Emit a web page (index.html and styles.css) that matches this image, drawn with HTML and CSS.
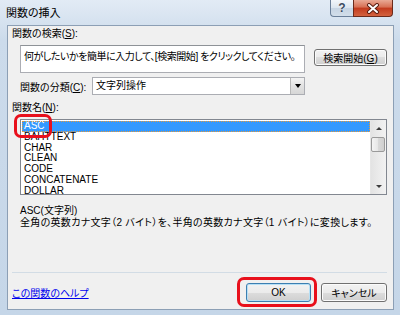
FILE: index.html
```html
<!DOCTYPE html>
<html lang="ja">
<head>
    <meta charset="UTF-8">
    <title>関数の挿入</title>
    <link rel="stylesheet" href="styles.css">
</head>
<body>
    <div class="window">
        <div class="titlebar">
            <span class="title">関数の挿入</span>
            <div class="caption-buttons">
                <div class="cap-btn help">?</div>
                <div class="cap-btn close">
                    <svg width="14" height="11" viewBox="0 0 14 11">
                        <path d="M3 2 L11 9 M11 2 L3 9" stroke="#5a1e12" stroke-width="4" stroke-linecap="round"/>
                        <path d="M3 2 L11 9 M11 2 L3 9" stroke="#fff" stroke-width="2" stroke-linecap="round"/>
                    </svg>
                </div>
            </div>
        </div>

        <div class="client">
            <div class="label">関数の検索(<u>S</u>):</div>
            <div class="search-row">
                <div class="textbox">何がしたいかを簡単に入力して、[検索開始] をクリックしてください。</div>
                <button class="btn search-btn">検索開始(<u>G</u>)</button>
            </div>
            <div class="category-row">
                <span class="category-label">関数の分類(<u>C</u>):</span>
                <div class="select">
                    <span class="select-value">文字列操作</span>
                    <span class="drop"><span class="arrow-down"></span></span>
                </div>
            </div>
            <div class="label name-label">関数名(<u>N</u>):</div>
            <div class="listbox">
                <ul class="items">
                    <li class="selected">ASC</li>
                    <li>BAHTTEXT</li>
                    <li>CHAR</li>
                    <li>CLEAN</li>
                    <li>CODE</li>
                    <li>CONCATENATE</li>
                    <li>DOLLAR</li>
                </ul>
                <div class="scrollbar">
                    <div class="sb-btn"><span class="tri-up"></span></div>
                    <div class="sb-track"><div class="thumb"></div></div>
                    <div class="sb-btn"><span class="tri-down"></span></div>
                </div>
                <span class="ring ring-asc"></span>
            </div>
            <div class="desc">
                <div>ASC(文字列)</div>
                <div class="desc-text">全角の英数カナ文字（2 バイト）を、半角の英数カナ文字（1 バイト）に変換します。</div>
            </div>
            <div class="separator"></div>
            <div class="footer">
                <a href="#" class="help-link">この関数のヘルプ</a>
                <div class="footer-buttons">
                    <button class="btn ok">OK<span class="ring ring-ok"></span></button>
                    <button class="btn cancel">キャンセル</button>
                </div>
            </div>
        </div>
    </div>
</body>
</html>
```

FILE: styles.css
```css
body {
    margin: 0;
    font-family: "Liberation Sans", "Noto Sans CJK JP", sans-serif;
    font-size: 10px;
    font-feature-settings: "palt";
    color: #000;
}

.window {
    width: 400px;
    height: 315px;
    display: flex;
    flex-direction: column;
    background: linear-gradient(#e2ebf5, #ccdbeb 40px, #c5d6e8);
}

.titlebar {
    height: 25px;
    display: flex;
    justify-content: space-between;
    align-items: flex-start;
    padding: 0 7px 0 6px;
}

.title {
    font-size: 11px;
    line-height: 26px;
}

.caption-buttons {
    display: flex;
}

.cap-btn {
    height: 17px;
    box-sizing: border-box;
    border: 1px solid #6a7f99;
    border-top: none;
    display: flex;
    align-items: center;
    justify-content: center;
}

.help {
    width: 23px;
    border-right: none;
    border-radius: 0 0 0 4px;
    background: linear-gradient(#f2f6fa, #dbe5ef 50%, #c6d4e3 51%, #d2deea);
    font-size: 12px;
    font-weight: bold;
    color: #3a4a60;
    text-shadow: 0 0 1px #fff;
}

.close {
    width: 40px;
    border-color: #6b2a1b;
    border-radius: 0 0 4px 0;
    background: linear-gradient(#e9a995, #d76f53 45%, #c23a1d 50%, #d3623f);
}

.client {
    flex: 1;
    margin: 0 6px 5px 7px;
    border: 1px solid #8c9fb5;
    background: #f0f0f0;
    padding: 2px 6px 0 4px;
    display: flex;
    flex-direction: column;
}

.label {
    line-height: 12px;
}

.search-row {
    display: flex;
    margin: 5px 0 0 8px;
    gap: 9px;
}

.textbox {
    width: 285px;
    height: 28px;
    box-sizing: border-box;
    border: 1px solid #abadb3;
    border-top-color: #8e9297;
    background: #fff;
    padding: 5px 3px;
    line-height: 12px;
    letter-spacing: -0.45px;
    white-space: nowrap;
    overflow: hidden;
}

.btn {
    font: inherit;
    font-feature-settings: "palt";
    color: #000;
    padding: 0;
    height: 19px;
    box-sizing: border-box;
    border: 1px solid #707070;
    border-radius: 3px;
    background: linear-gradient(#f2f2f2, #ebebeb 50%, #dddddd 50%, #cfcfcf);
    box-shadow: inset 0 0 0 1px #fbfbfb;
}

.search-btn {
    width: 73px;
    height: 17px;
    margin-top: 4px;
}

.category-row {
    display: flex;
    align-items: center;
    margin: 4px 0 0 8px;
    height: 18px;
}

.category-label {
    width: 72px;
}

.select {
    width: 213px;
    height: 18px;
    box-sizing: border-box;
    border: 1px solid #abadb3;
    background: #fff;
    display: flex;
    justify-content: space-between;
}

.select-value {
    line-height: 16px;
    padding-left: 3px;
}

.drop {
    width: 13px;
    border-left: 1px solid #b8b8b8;
    background: linear-gradient(#f4f4f4, #e2e2e2 50%, #d6d6d6);
    display: flex;
    align-items: center;
    justify-content: center;
}

.arrow-down {
    border-left: 3.5px solid transparent;
    border-right: 3.5px solid transparent;
    border-top: 4px solid #000;
}

.name-label {
    margin-top: 7px;
}

.listbox {
    position: relative;
    margin: 5px 0 0 8px;
    height: 76px;
    box-sizing: border-box;
    border: 1px solid #828790;
    background: #fff;
    display: flex;
}

.items {
    flex: 1;
    list-style: none;
    margin: 0;
    padding: 1px 0 0 1px;
    overflow: hidden;
}

.items li {
    line-height: 10.8px;
    height: 10.8px;
    padding-left: 2px;
    box-sizing: border-box;
}

.items li.selected {
    background: #3399ff;
    color: #fff;
    outline: 1px dotted #e59a3c;
    outline-offset: -1px;
}

.scrollbar {
    width: 15px;
    display: flex;
    flex-direction: column;
    background: linear-gradient(90deg, #e3e3e3, #f2f2f2);
    border-left: 1px solid #e6e6e6;
}

.sb-btn {
    height: 16px;
    display: flex;
    align-items: center;
    justify-content: center;
}

.tri-up {
    border-left: 3px solid transparent;
    border-right: 3px solid transparent;
    border-bottom: 3px solid #3c3c3c;
}

.tri-down {
    border-left: 3px solid transparent;
    border-right: 3px solid transparent;
    border-top: 3px solid #3c3c3c;
}

.sb-track {
    flex: 1;
}

.thumb {
    margin: 1px 1px 0 0;
    height: 15px;
    box-sizing: border-box;
    border: 1px solid #9a9a9a;
    border-radius: 2px;
    background: linear-gradient(90deg, #f4f4f4, #e6e6e6 50%, #d9d9d9 51%, #cfcfcf);
}

.ring {
    position: absolute;
    box-sizing: border-box;
    border: 3px solid #e8101c;
    border-radius: 7px;
    pointer-events: none;
}

.ring-asc {
    left: -7px;
    top: -6px;
    width: 38px;
    height: 24px;
}

.desc {
    margin: 10px 0 0 8px;
    line-height: 12px;
    white-space: nowrap;
}

.desc-text {
    letter-spacing: 0.3px;
}

.separator {
    margin-top: 43px;
    height: 1px;
    background: #d2dce5;
}

.footer {
    margin-top: 10px;
    height: 19px;
    display: flex;
    justify-content: space-between;
    align-items: center;
}

.help-link {
    color: #0000ee;
    text-decoration: underline;
}

.footer-buttons {
    display: flex;
    gap: 10px;
}

.ok {
    position: relative;
    width: 65px;
    border-color: #3c7fb1;
    box-shadow: inset 0 0 0 1px #b7e0f6;
}

.ring-ok {
    left: -10px;
    top: -7px;
    width: 80px;
    height: 30px;
}

.cancel {
    width: 66px;
}
```
